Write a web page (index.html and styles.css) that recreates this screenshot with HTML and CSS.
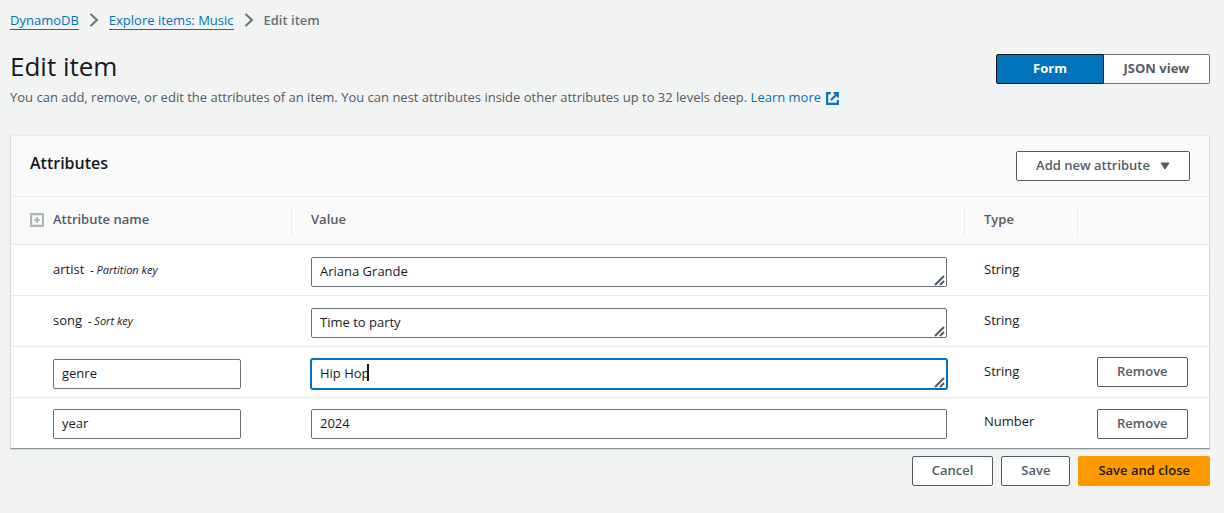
FILE: index.html
```html
<!DOCTYPE html>
<html lang="en">
<head>
<meta charset="utf-8">
<title>Edit item</title>
<link rel="stylesheet" href="styles.css">
</head>
<body>
<main class="page">
  <nav class="breadcrumbs" aria-label="Breadcrumbs">
    <a class="crumb" href="#">DynamoDB</a>
    <svg class="chevron" viewBox="0 0 10 14" aria-hidden="true"><path d="M1.500 1l6.500 6-6.500 6"/></svg>
    <a class="crumb" href="#">Explore items: Music</a>
    <svg class="chevron" viewBox="0 0 10 14" aria-hidden="true"><path d="M1.500 1l6.500 6-6.500 6"/></svg>
    <span class="crumb-current">Edit item</span>
  </nav>

  <header class="page-header">
    <div class="heading">
      <h1 class="title">Edit item</h1>
      <p class="description">You can add, remove, or edit the attributes of an item. You can nest attributes inside other attributes up to 32 levels deep. <a class="learn" href="#">Learn more<svg class="external" viewBox="0 0 14 14" aria-hidden="true"><path d="M5.500 2H2v10h10V8.500M8 2h4v4M12 2L5.500 8.500"/></svg></a></p>
    </div>
    <div class="segmented">
      <button class="segment segment-on" type="button">Form</button>
      <button class="segment segment-off" type="button">JSON view</button>
    </div>
  </header>

  <section class="card">
    <div class="card-header">
      <h2 class="card-title">Attributes</h2>
      <button class="btn btn-menu" type="button">Add new attribute<svg class="caret-down" viewBox="0 0 10 8" aria-hidden="true"><path d="M1 1h8L5 7z"/></svg></button>
    </div>
    <table class="attributes">
      <colgroup><col class="col-name"><col><col class="col-type"><col class="col-action"></colgroup>
      <thead>
        <tr>
          <th scope="col"><div class="head head-name"><button class="expand" type="button" aria-label="Expand all"><svg viewBox="0 0 13 13" aria-hidden="true"><path d="M1 1h11v11H1z"/><path d="M6.500 4v5M4 6.500h5"/></svg></button>Attribute name</div></th>
          <th scope="col"><div class="head">Value</div></th>
          <th scope="col"><div class="head">Type</div></th>
          <th scope="col"><div class="head head-last"></div></th>
        </tr>
      </thead>
      <tbody>
        <tr>
          <td class="name"><div class="line"><label for="artist">artist</label><em class="key">- Partition key</em></div></td>
          <td><div class="field"><textarea class="input" id="artist" rows="1">Ariana Grande</textarea><svg class="grip" viewBox="0 0 11 11" aria-hidden="true"><path d="M1 10L10 1M6 10l4-4"/></svg></div></td>
          <td><div class="line">String</div></td>
          <td></td>
        </tr>
        <tr>
          <td class="name"><div class="line"><label for="song">song</label><em class="key">- Sort key</em></div></td>
          <td><div class="field"><textarea class="input" id="song" rows="1">Time to party</textarea><svg class="grip" viewBox="0 0 11 11" aria-hidden="true"><path d="M1 10L10 1M6 10l4-4"/></svg></div></td>
          <td><div class="line">String</div></td>
          <td></td>
        </tr>
        <tr>
          <td class="name"><input class="input" type="text" value="genre" aria-label="Attribute name"></td>
          <td><div class="field"><textarea class="input input-active" rows="1" aria-label="Value of genre">Hip Hop</textarea><span class="text-cursor"></span><svg class="grip" viewBox="0 0 11 11" aria-hidden="true"><path d="M1 10L10 1M6 10l4-4"/></svg></div></td>
          <td><div class="line">String</div></td>
          <td class="action"><button class="btn" type="button">Remove</button></td>
        </tr>
        <tr>
          <td class="name"><input class="input" type="text" value="year" aria-label="Attribute name"></td>
          <td><input class="input" type="text" value="2024" aria-label="Value of year"></td>
          <td><div class="line">Number</div></td>
          <td class="action"><button class="btn" type="button">Remove</button></td>
        </tr>
      </tbody>
    </table>
  </section>

  <footer class="actions">
    <button class="btn" type="button">Cancel</button>
    <button class="btn" type="button">Save</button>
    <button class="btn btn-primary" type="button">Save and close</button>
  </footer>
</main>
</body>
</html>
```
FILE: styles.css
```css
* { box-sizing: border-box; }

body {
  margin: 0;
  background: #f2f3f3;
  color: #16191f;
  font: 13px/20px "Open Sans", "Noto Sans", sans-serif;
}

button, input, textarea { font: inherit; color: inherit; }
button { cursor: pointer; }

.page { padding: 10px 14px 26px 10px; }

.breadcrumbs { display: flex; align-items: center; gap: 10px; }
.crumb {
  color: #0073bb;
  line-height: 18px;
  text-decoration: none;
  border-bottom: 1px solid #0073bb;
}
.crumb-current { color: #687078; font-weight: 600; }
.chevron { width: 10px; height: 14px; fill: none; stroke: #687078; stroke-width: 2; }

.page-header {
  display: flex;
  justify-content: space-between;
  align-items: flex-start;
  margin-top: 20px;
}
.title { margin: 0; font-size: 26px; line-height: 32px; font-weight: 400; }
.description { margin: 5px 0 0; color: #545b64; }
.learn { color: #0073bb; text-decoration: none; white-space: nowrap; }
.external {
  width: 15px;
  height: 15px;
  margin-left: 4px;
  vertical-align: -4px;
  fill: none;
  stroke: currentColor;
  stroke-width: 2;
}

.segmented { display: flex; margin-top: 4px; }
.segment {
  height: 30px;
  padding: 0 18px 2px;
  border: 1px solid #687078;
  background: #fff;
  color: #545b64;
  font-weight: 700;
}
.segment-on {
  min-width: 108px;
  border-color: #16191f;
  border-radius: 2px 0 0 2px;
  background: #0073bb;
  color: #fff;
}
.segment-off { min-width: 106px; border-left: 0; border-radius: 0 2px 2px 0; }

.card {
  margin-top: 28px;
  background: #fff;
  border: 1px solid #d5dbdb;
  border-top-color: #eaeded;
  border-bottom-color: #879196;
  box-shadow: 0 1px 1px #d5dbdb;
}
.card-header {
  display: flex;
  justify-content: space-between;
  align-items: flex-start;
  height: 61px;
  padding: 15px 19px 14px;
  background: #fafafa;
  border-bottom: 1px solid #eaeded;
}
.card-title { margin: 0; font-size: 16px; line-height: 24px; font-weight: 600; }

.btn {
  height: 30px;
  padding: 0 19px 2px;
  border: 1px solid #545b64;
  border-radius: 2px;
  background: #fff;
  color: #545b64;
  font-weight: 600;
  white-space: nowrap;
}
.btn-menu { display: flex; align-items: center; gap: 10px; }
.caret-down { width: 10px; height: 8px; margin-top: 2px; fill: #545b64; stroke: #545b64; stroke-linejoin: round; }

.attributes { width: 100%; border-collapse: separate; border-spacing: 0; table-layout: fixed; }
.col-name { width: 281px; }
.col-type { width: 113px; }
.col-action { width: 131px; }

.attributes th {
  height: 48px;
  padding: 0;
  background: #fafafa;
  border-bottom: 1px solid #eaeded;
  color: #545b64;
  font-weight: 600;
  text-align: left;
}
.head { height: 30px; padding: 3px 19px; border-right: 1px solid #eaeded; }
.head-name { display: flex; gap: 9px; }
.head-last { border-right: 0; }
.expand { height: 22px; padding: 0; border: 0; background: none; line-height: 0; }
.expand svg { width: 14px; height: 14px; fill: none; stroke: #aab7b8; stroke-width: 2; }

.attributes td {
  height: 51px;
  padding: 12px 18px 8px 19px;
  border-bottom: 1px solid #eaeded;
  vertical-align: top;
}
.attributes tr:last-child td { height: 50px; padding-top: 11px; border-bottom: 0; }
.attributes .name { padding-left: 42px; padding-right: 51px; }
.attributes td.action { padding-top: 10px; }
.line { padding-top: 2px; }
.key { margin-left: 6px; font-size: 11px; }

.field { position: relative; }
.input {
  display: block;
  width: 100%;
  height: 30px;
  margin: 0;
  padding: 3px 8px 5px;
  border: 1px solid #687078;
  border-radius: 2px;
  background: #fff;
  outline: 0;
  resize: none;
  overflow: hidden;
}
.input-active { border-color: #0073bb; box-shadow: 0 0 0 1px #0073bb; }
.grip {
  position: absolute;
  right: 2px;
  bottom: 1px;
  width: 11px;
  height: 11px;
  fill: none;
  stroke: #545b64;
  stroke-width: 2;
}
.text-cursor {
  position: absolute;
  left: 56px;
  top: 5px;
  width: 2px;
  height: 17px;
  background: #16191f;
}

.actions { display: flex; justify-content: flex-end; gap: 8px; margin-top: 7px; }
.btn-primary { border-color: #ff9900; background: #ff9900; color: #16191f; }
```
